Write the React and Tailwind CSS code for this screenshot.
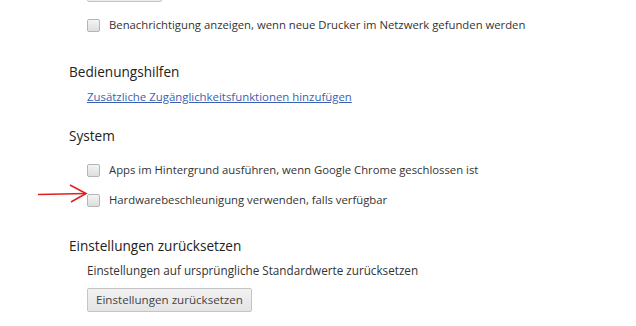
export default function App() {
  const font = { fontFamily: '"Open Sans", "Noto Sans", sans-serif' };

  const Checkbox = () => (
    <span className="inline-block w-[13px] h-[13px] rounded-[2px] border border-[#b5b5b5] bg-gradient-to-b from-[#f4f4f4] to-[#dedede] shrink-0" />
  );

  return (
    <div className="relative w-[636px] h-[326px] bg-white text-[#333] overflow-hidden" style={font}>
      {/* bottom edge of a button above the fold */}
      <div className="absolute left-[87px] top-[-22px] w-[75px] h-[24px] border border-[#c4c4c4] rounded-[2px] bg-[#ededed]" />

      <div className="pl-[69px] pt-[17px]">
        <div className="pl-[18px] flex items-center gap-[9px] h-[16px] text-[11.3px]">
          <Checkbox />
          <span>Benachrichtigung anzeigen, wenn neue Drucker im Netzwerk gefunden werden</span>
        </div>

        <h2 className="mt-[30px] text-[13.6px] leading-[18px] text-[#222]">Bedienungshilfen</h2>
        <div className="pl-[18px] mt-[8px] text-[11.4px] leading-[16px]">
          <a href="#" className="text-[#3a5fb5] underline">Zusätzliche Zugänglichkeitsfunktionen hinzufügen</a>
        </div>

        <h2 className="mt-[22px] text-[13.6px] leading-[18px] text-[#222]">System</h2>
        <div className="pl-[18px] mt-[17px] flex items-center gap-[9px] h-[16px] text-[11.3px]">
          <Checkbox />
          <span>Apps im Hintergrund ausführen, wenn Google Chrome geschlossen ist</span>
        </div>
        <div className="relative pl-[18px] mt-[14px] flex items-center gap-[9px] h-[16px] text-[11.3px]">
          <svg className="absolute left-[-31px] top-[-9px]" width="52" height="22" viewBox="0 0 52 22" fill="none">
            <path d="M0 11.5 L48 10.5" stroke="#e02020" strokeWidth="1.6" />
            <path d="M32 2 L48 10.5 L33 19" stroke="#e02020" strokeWidth="1.6" />
          </svg>
          <Checkbox />
          <span>Hardwarebeschleunigung verwenden, falls verfügbar</span>
        </div>

        <h2 className="mt-[29px] text-[13.6px] leading-[18px] text-[#222]">Einstellungen zurücksetzen</h2>
        <div className="pl-[18px] mt-[7px] text-[11.7px] leading-[16px]">
          Einstellungen auf ursprüngliche Standardwerte zurücksetzen
        </div>
        <div className="pl-[18px] mt-[8px]">
          <button className="h-[24px] px-[8px] border border-[#c4c4c4] rounded-[2px] bg-gradient-to-b from-[#f2f2f2] to-[#e4e4e4] text-[11.6px] text-[#444]">
            Einstellungen zurücksetzen
          </button>
        </div>
      </div>
    </div>
  );
}
